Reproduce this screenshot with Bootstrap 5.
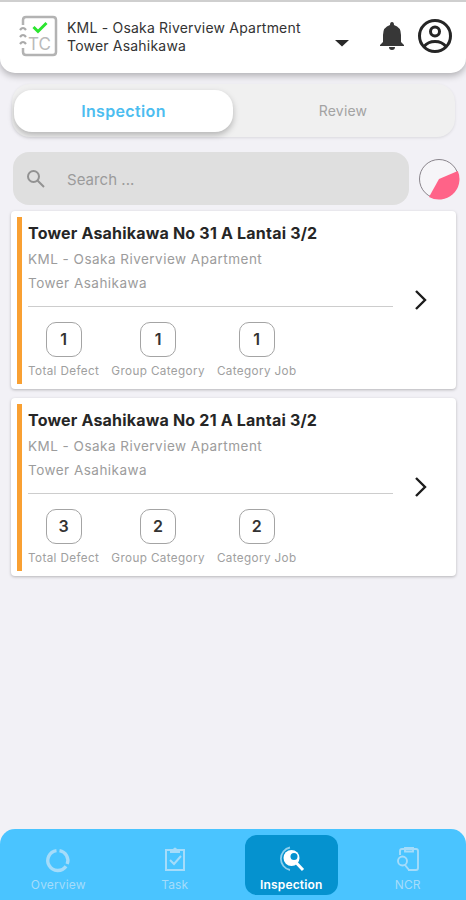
<!DOCTYPE html>
<html lang="en">
<head>
<meta charset="utf-8">
<meta name="viewport" content="width=device-width, initial-scale=1">
<title>Inspection</title>
<link href="https://cdn.jsdelivr.net/npm/bootstrap@5.3.0/dist/css/bootstrap.min.css" rel="stylesheet">
<style>
  body { font-family: Inter, "Liberation Sans", sans-serif; background: #f2f1f6; height: 900px; overflow: hidden; }
  svg { display: block; flex: none; }
  .app-header { height: 73px; border-top: 2px solid #cfcfcf; border-radius: 0 0 15px 15px; box-shadow: 0 3px 7px rgba(0,0,0,.27); padding: 0 13px 3px 19px; }
  .project { width: 262px; margin-left: 9px; padding-top: 1px; font-size: 14px; line-height: 18px; letter-spacing: .2px; color: #333; }
  .profile { margin-left: 12px; }
  .segments { height: 53px; margin: 11px 11px 0 12px; padding: 0 2px; border-radius: 18px; background: #f0f0f0; box-shadow: 0 1px 3px rgba(0,0,0,.1); }
  .segment { border: 0; background: none; font-size: 14px; color: #a3a3a3; letter-spacing: .2px; height: 42px; padding: 0; }
  .segment.on { width: 219px; border-radius: 18px; background: #fff; color: #4cbdf0; font-size: 16px; font-weight: 600; letter-spacing: .35px; box-shadow: 0 3px 6px rgba(0,0,0,.25); }
  .search-row { margin: 15px 6px 0 13px; }
  .search-box { width: 396px; height: 53px; border-radius: 16px; background: #dfdfdf; padding-left: 12px; color: #9b9b9b; font-size: 15px; letter-spacing: .05px; }
  .unit-list { margin-top: 6px; }
  .unit { height: 178px; margin: 0 10px 10px 11px; border: 0; border-radius: 4px; box-shadow: 0 1px 3px rgba(0,0,0,.25); }
  .unit + .unit { margin-top: -1px; }
  .stripe { width: 5px; margin: 6px 6px 5px 6px; background: #f9a032; }
  .unit-body { width: 365px; }
  .unit-title { font-size: 16px; line-height: 20px; font-weight: 700; letter-spacing: .2px; color: #262626; margin: 12px 0 0; }
  .unit-sub { font-size: 13.5px; line-height: 24px; letter-spacing: .48px; color: #9c9c9c; }
  .rule { height: 1px; background: #cdcdcd; margin-top: 11px; }
  .stats { margin-top: 15px; gap: 12px; }
  .count { width: 36px; height: 35px; padding-bottom: 1px; border: 1px solid #a4a4a4; border-radius: 10px; font-size: 16px; font-weight: 600; color: #333; }
  .stat-name { font-size: 11.7px; line-height: 16px; letter-spacing: .38px; margin-top: 6px; color: #a0a0a0; white-space: nowrap; }
  .tabs { height: 71px; border-radius: 15px 15px 0 0; background: #4ac4ff; color: #a5dcfa; padding-top: 6px; }
  .tab-item { width: 25%; }
  .tab-inner { width: 93px; height: 60px; padding-top: 11px; font-size: 12px; line-height: 16px; letter-spacing: .15px; border-radius: 12px; }
  .tab-inner svg { margin-bottom: 3px; }
  .tab-inner.on { background: #0592cf; color: #fff; font-weight: 600; }
</style>
<script src="https://cdn.jsdelivr.net/npm/bootstrap@5.3.0/dist/js/bootstrap.bundle.min.js"></script>
</head>
<body class="d-flex flex-column">
<header class="app-header bg-white d-flex align-items-center">
  <svg width="39" height="42" viewBox="0 0 39 42" fill="none">
    <path d="M4 10V5q0-3 3-3h27q3 0 3 3v32q0 3-3 3H7q-3 0-3-3v-4" stroke="#b3b3b3" stroke-width="2.500"/>
    <path d="M1 15q3-4 6 0M1 22q3-4 6 0M1 29q3-4 6 0" stroke="#aaa" stroke-width="2.200"/>
    <path d="m14.500 12 4.500 4.500 8.500-8.500" stroke="#2be52f" stroke-width="3"/>
    <text x="9" y="35" font-family="Inter, sans-serif" font-size="17" fill="#bababa" textLength="23">TC</text>
  </svg>
  <div class="project">KML - Osaka Riverview Apartment<br>Tower Asahikawa</div>
  <svg class="mt-3" width="26" height="14" viewBox="0 0 26 14"><path d="M6 3h14l-7 6.500z" fill="#292929"/></svg>
  <svg class="ms-auto" width="26" height="31" viewBox="0 0 26 31" fill="#373737"><path d="M13 1q2 0 2 3 7 2 7 10v7l3 3v1H1v-1l3-3v-7Q4 6 11 4q0-3 2-3zM10 26h6q0 3-3 3t-3-3z"/></svg>
  <svg class="profile" width="36" height="36" viewBox="0 0 36 36" fill="none" stroke="#252525" stroke-width="3"><circle cx="18" cy="18" r="15.500"/><circle cx="18" cy="13.500" r="4.500"/><path d="M7 28.500q4-5 11-5t11 5"/></svg>
</header>

<div class="segments d-flex align-items-center">
  <button class="segment on">Inspection</button>
  <button class="segment flex-fill">Review</button>
</div>

<div class="search-row d-flex align-items-center justify-content-between">
  <div class="search-box d-flex align-items-center">
    <svg width="22" height="22" viewBox="0 0 22 22" fill="none" stroke="#929292" stroke-width="2"><circle cx="8.500" cy="8.500" r="5.500"/><path d="m12.500 12.500 6.500 6.500"/></svg>
    <span class="ms-3 ps-1 pt-1">Search ...</span>
  </div>
  <svg width="42" height="42" viewBox="0 0 42 42"><circle cx="21" cy="21" r="19.500" fill="#f6f5f8" stroke="#8a858c"/><path d="M21 21 39.800 13A20.500 20.500 0 0 1 11 39z" fill="#ff6388"/></svg>
</div>

<main class="unit-list flex-fill">
  <article class="unit card flex-row">
    <div class="stripe"></div>
    <div class="unit-body">
      <h2 class="unit-title">Tower Asahikawa No 31 A Lantai 3/2</h2>
      <div class="unit-sub mt-1">KML - Osaka Riverview Apartment<br>Tower Asahikawa</div>
      <div class="rule"></div>
      <div class="stats d-flex">
        <div class="stat d-flex flex-column align-items-center"><span class="count d-flex align-items-center justify-content-center">1</span><span class="stat-name">Total Defect</span></div>
        <div class="stat d-flex flex-column align-items-center"><span class="count d-flex align-items-center justify-content-center">1</span><span class="stat-name">Group Category</span></div>
        <div class="stat d-flex flex-column align-items-center"><span class="count d-flex align-items-center justify-content-center">1</span><span class="stat-name">Category Job</span></div>
      </div>
    </div>
    <svg class="align-self-center ms-3" width="24" height="24" viewBox="0 0 24 24" fill="none" stroke="#1c1c1c" stroke-width="2.400"><path d="m7 3 9 9-9 9"/></svg>
  </article>
  <article class="unit card flex-row">
    <div class="stripe"></div>
    <div class="unit-body">
      <h2 class="unit-title">Tower Asahikawa No 21 A Lantai 3/2</h2>
      <div class="unit-sub mt-1">KML - Osaka Riverview Apartment<br>Tower Asahikawa</div>
      <div class="rule"></div>
      <div class="stats d-flex">
        <div class="stat d-flex flex-column align-items-center"><span class="count d-flex align-items-center justify-content-center">3</span><span class="stat-name">Total Defect</span></div>
        <div class="stat d-flex flex-column align-items-center"><span class="count d-flex align-items-center justify-content-center">2</span><span class="stat-name">Group Category</span></div>
        <div class="stat d-flex flex-column align-items-center"><span class="count d-flex align-items-center justify-content-center">2</span><span class="stat-name">Category Job</span></div>
      </div>
    </div>
    <svg class="align-self-center ms-3" width="24" height="24" viewBox="0 0 24 24" fill="none" stroke="#1c1c1c" stroke-width="2.400"><path d="m7 3 9 9-9 9"/></svg>
  </article>
</main>

<nav class="tabs d-flex">
  <div class="tab-item d-flex justify-content-center"><div class="tab-inner d-flex flex-column align-items-center">
    <svg width="28" height="28" viewBox="0 0 28 28" fill="none" stroke="#a5dcfa" stroke-width="3.400"><path d="M15.500 4.600A10 10 0 0 1 23.200 18M22 20.200A10 10 0 1 1 12.500 4.600"/></svg>Overview</div></div>
  <div class="tab-item d-flex justify-content-center"><div class="tab-inner d-flex flex-column align-items-center">
    <svg width="28" height="28" viewBox="0 0 28 28" fill="none" stroke="#a5dcfa" stroke-width="2"><path d="M5 4h18v20H5zM9 14l4 4 7-8"/><path d="M9 3h3q2-3 4 0h3v4H9z" fill="#a5dcfa" stroke="none"/></svg>Task</div></div>
  <div class="tab-item d-flex justify-content-center"><div class="tab-inner on d-flex flex-column align-items-center">
    <svg width="28" height="28" viewBox="0 0 28 28" fill="none" stroke="#fff"><path d="M13 1.500A11.500 11.500 0 0 0 13 24" stroke="#8ed0ee" stroke-width="1.800"/><circle cx="14.500" cy="12" r="8" fill="#fff" stroke="none"/><circle cx="17" cy="10.500" r="3.500" fill="#0592cf" stroke="none"/><path d="m19 16.500 7 7.500" stroke-width="3"/></svg>Inspection</div></div>
  <div class="tab-item d-flex justify-content-center"><div class="tab-inner d-flex flex-column align-items-center">
    <svg width="28" height="28" viewBox="0 0 28 28" fill="none" stroke="#a5dcfa" stroke-width="1.900"><path d="M6 9V5q0-2 2-2h14q2 0 2 2v17q0 2-2 2h-8"/><path d="M11 2h8v3.500h-8z"/><circle cx="8.500" cy="15" r="4.500"/><path d="m11 19 4 5"/></svg>NCR</div></div>
</nav>
</body>
</html>
